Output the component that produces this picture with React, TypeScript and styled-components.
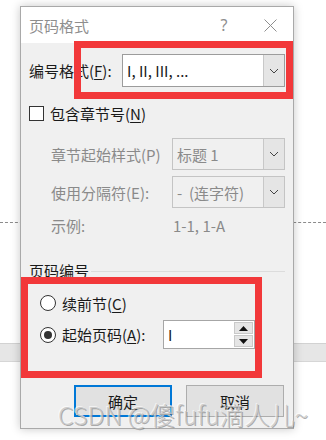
import styled, { createGlobalStyle } from 'styled-components';

const GlobalStyle = createGlobalStyle`
  html, body {
    margin: 0;
    padding: 0;
    background: #ffffff;
  }
  body {
    width: 326px;
    height: 440px;
    overflow: hidden;
    font-family: "Noto Sans CJK SC", "Noto Sans", sans-serif;
    color: #1a1a1a;
  }
`;

const Page = styled.div`
  position: relative;
  width: 326px;
  height: 440px;
  overflow: hidden;
`;

const Backdrop = styled.div`
  display: flex;
  flex-direction: column;
  padding-top: 222px;
`;

const DashedRule = styled.div`
  height: 0;
  border-top: 1px dashed #8c8c8c;
`;

const Band = styled.div`
  margin-top: 120px;
  height: 17px;
  background: #e6e6e6;
  border-top: 1px solid #d2d2d2;
  border-bottom: 1px solid #d6d6d6;
`;

const Dialog = styled.div`
  position: absolute;
  left: 20px;
  top: 6px;
  width: 274px;
  height: 423px;
  box-sizing: border-box;
  border: 1px solid #a9a9a9;
  background: #f0f0f0;
  box-shadow: 0 0 9px rgba(0, 0, 0, 0.22);
  display: flex;
  flex-direction: column;
`;

const TitleBar = styled.div`
  height: 36px;
  background: #ffffff;
  display: flex;
  align-items: center;
  padding-left: 8px;
`;

const Title = styled.span`
  font-size: 15px;
  color: #8e8e8e;
  flex: 1;
`;

const TitleButton = styled.span`
  width: 46px;
  display: flex;
  justify-content: center;
  align-items: center;
  color: #8e8e8e;
  font-size: 16px;
  font-family: "Noto Sans", sans-serif;
`;

const Body = styled.div`
  flex: 1;
  display: flex;
  flex-direction: column;
  padding: 0 8px;
  font-size: 15px;
`;

const Row = styled.div<{ $top: number; $h: number; $indent?: number }>`
  display: flex;
  align-items: center;
  justify-content: space-between;
  margin-top: ${(p) => p.$top}px;
  height: ${(p) => p.$h}px;
  padding-left: ${(p) => p.$indent || 0}px;
`;

const Label = styled.span<{ $muted?: boolean; $w?: number }>`
  white-space: nowrap;
  color: ${(p) => (p.$muted ? '#8a8a8a' : '#1a1a1a')};
  ${(p) => (p.$w ? `width: ${p.$w}px;` : '')}
`;

const U = styled.span`
  text-decoration: underline;
  text-underline-offset: 2px;
`;

const Combo = styled.div<{ $w: number; $disabled?: boolean }>`
  width: ${(p) => p.$w}px;
  height: 100%;
  box-sizing: border-box;
  border: 1px solid ${(p) => (p.$disabled ? '#c4c4c4' : '#9c9c9c')};
  background: ${(p) => (p.$disabled ? '#f0f0f0' : '#ffffff')};
  display: flex;
  align-items: stretch;
`;

const ComboText = styled.span<{ $muted?: boolean }>`
  flex: 1;
  display: flex;
  align-items: center;
  padding-left: 4px;
  color: ${(p) => (p.$muted ? '#8a8a8a' : '#1a1a1a')};
  white-space: pre;
`;

const ComboButton = styled.span`
  width: 20px;
  background: #e5e5e5;
  border-left: 1px solid #c8c8c8;
  display: flex;
  align-items: center;
  justify-content: center;
`;

const CheckRow = styled.label<{ $top: number }>`
  display: flex;
  align-items: center;
  gap: 6px;
  margin-top: ${(p) => p.$top}px;
  height: 18px;
`;

const CheckBox = styled.span`
  width: 13px;
  height: 13px;
  border: 1px solid #333333;
  background: #ffffff;
`;

const SampleRow = styled.div`
  display: flex;
  align-items: center;
  margin-top: 8px;
  height: 18px;
  padding-left: 22px;
  color: #8a8a8a;
`;

const SampleLabel = styled.span`
  width: 122px;
`;

const GroupHeader = styled.div`
  display: flex;
  align-items: center;
  margin-top: 27px;
  height: 18px;
`;

const GroupLine = styled.span`
  flex: 1;
  height: 1px;
  background: #dcdcdc;
  margin: 2px 0 0 2px;
`;

const RadioRow = styled.div<{ $top: number; $h: number }>`
  display: flex;
  align-items: center;
  gap: 6px;
  padding-left: 11px;
  margin-top: ${(p) => p.$top}px;
  height: ${(p) => p.$h}px;
`;

const Radio = styled.span<{ $checked?: boolean }>`
  width: 14px;
  height: 14px;
  border-radius: 50%;
  border: 1px solid #333333;
  background: #ffffff;
  display: flex;
  align-items: center;
  justify-content: center;
  &::after {
    content: '';
    width: 8px;
    height: 8px;
    border-radius: 50%;
    background: ${(p) => (p.$checked ? '#333333' : 'transparent')};
  }
`;

const Spin = styled.div`
  width: 92px;
  height: 29px;
  box-sizing: border-box;
  border: 1px solid #a6a6a6;
  background: #ffffff;
  display: flex;
`;

const SpinText = styled.span`
  flex: 1;
  padding-left: 4px;
  display: flex;
  align-items: center;
`;

const SpinButtons = styled.span`
  width: 19px;
  display: flex;
  flex-direction: column;
  gap: 1px;
  padding: 1px 1px 1px 0;
`;

const SpinButton = styled.span`
  flex: 1;
  background: #e5e5e5;
  border: 1px solid #c9c9c9;
  display: flex;
  align-items: center;
  justify-content: center;
`;

const ButtonRow = styled.div`
  display: flex;
  justify-content: flex-end;
  gap: 14px;
  margin-top: 36px;
  padding-right: 1px;
`;

const Button = styled.button<{ $primary?: boolean }>`
  width: 98px;
  height: 32px;
  box-sizing: border-box;
  background: #e1e1e1;
  border: ${(p) => (p.$primary ? '2px solid #0078d7' : '1px solid #adadad')};
  font-family: inherit;
  font-size: 15px;
  color: #1a1a1a;
  padding: 0;
`;

const Highlight = styled.div<{ $x: number; $y: number; $w: number; $h: number }>`
  position: absolute;
  left: ${(p) => p.$x}px;
  top: ${(p) => p.$y}px;
  width: ${(p) => p.$w}px;
  height: ${(p) => p.$h}px;
  box-sizing: border-box;
  border: 7px solid #f2383a;
  pointer-events: none;
`;

const Watermark = styled.div`
  position: absolute;
  left: 58px;
  top: 396px;
  font-size: 25px;
  font-weight: 300;
  white-space: nowrap;
  color: rgba(200, 200, 200, 0.85);
  text-shadow: 1px 1px 0 rgba(110, 110, 110, 0.55), -1px -1px 0 rgba(255, 255, 255, 0.6);
  pointer-events: none;
`;

const Chevron = () => (
  <svg width="10" height="6" viewBox="0 0 10 6">
    <polyline points="1,1 5,5 9,1" fill="none" stroke="#444" strokeWidth="1" />
  </svg>
);

const Arrow = ({ up }: { up?: boolean }) => (
  <svg width="9" height="5" viewBox="0 0 9 5">
    <polygon points={up ? '0,5 4.5,0 9,5' : '0,0 4.5,5 9,0'} fill="#111" />
  </svg>
);

const Close = () => (
  <svg width="13" height="13" viewBox="0 0 13 13">
    <path d="M0.5 0.5 L12.5 12.5 M12.5 0.5 L0.5 12.5" stroke="#8e8e8e" strokeWidth="1" />
  </svg>
);

export default function App() {
  return (
    <Page>
      <GlobalStyle />
      <Backdrop>
        <DashedRule />
        <Band />
      </Backdrop>

      <Dialog>
        <TitleBar>
          <Title>页码格式</Title>
          <TitleButton>?</TitleButton>
          <TitleButton>
            <Close />
          </TitleButton>
        </TitleBar>
        <Body>
          <Row $top={11} $h={33}>
            <Label>
              编号格式(<U>F</U>):
            </Label>
            <Combo $w={163}>
              <ComboText>I, II, III, ...</ComboText>
              <ComboButton>
                <Chevron />
              </ComboButton>
            </Combo>
          </Row>

          <CheckRow $top={17}>
            <CheckBox />
            <span>
              包含章节号(<U>N</U>)
            </span>
          </CheckRow>

          <Row $top={16} $h={32} $indent={22}>
            <Label $muted>章节起始样式(P)</Label>
            <Combo $w={113} $disabled>
              <ComboText $muted>标题 1</ComboText>
              <ComboButton>
                <Chevron />
              </ComboButton>
            </Combo>
          </Row>

          <Row $top={6} $h={32} $indent={22}>
            <Label $muted>使用分隔符(E):</Label>
            <Combo $w={113} $disabled>
              <ComboText $muted>{'-  (连字符)'}</ComboText>
              <ComboButton>
                <Chevron />
              </ComboButton>
            </Combo>
          </Row>

          <SampleRow>
            <SampleLabel>示例:</SampleLabel>
            <span>1-1, 1-A</span>
          </SampleRow>

          <GroupHeader>
            <span>页码编号</span>
            <GroupLine />
          </GroupHeader>

          <RadioRow $top={15} $h={18}>
            <Radio />
            <span>
              续前节(<U>C</U>)
            </span>
          </RadioRow>

          <RadioRow $top={8} $h={29}>
            <Radio $checked />
            <Label $w={95}>
              起始页码(<U>A</U>):
            </Label>
            <Spin>
              <SpinText>I</SpinText>
              <SpinButtons>
                <SpinButton>
                  <Arrow up />
                </SpinButton>
                <SpinButton>
                  <Arrow />
                </SpinButton>
              </SpinButtons>
            </Spin>
          </RadioRow>

          <ButtonRow>
            <Button $primary>确定</Button>
            <Button>取消</Button>
          </ButtonRow>
        </Body>
      </Dialog>

      <Highlight $x={74} $y={41} $w={219} $h={58} />
      <Highlight $x={21} $y={277} $w={241} $h={101} />

      <Watermark>CSDN @傻fufu滴人儿~</Watermark>
    </Page>
  );
}
